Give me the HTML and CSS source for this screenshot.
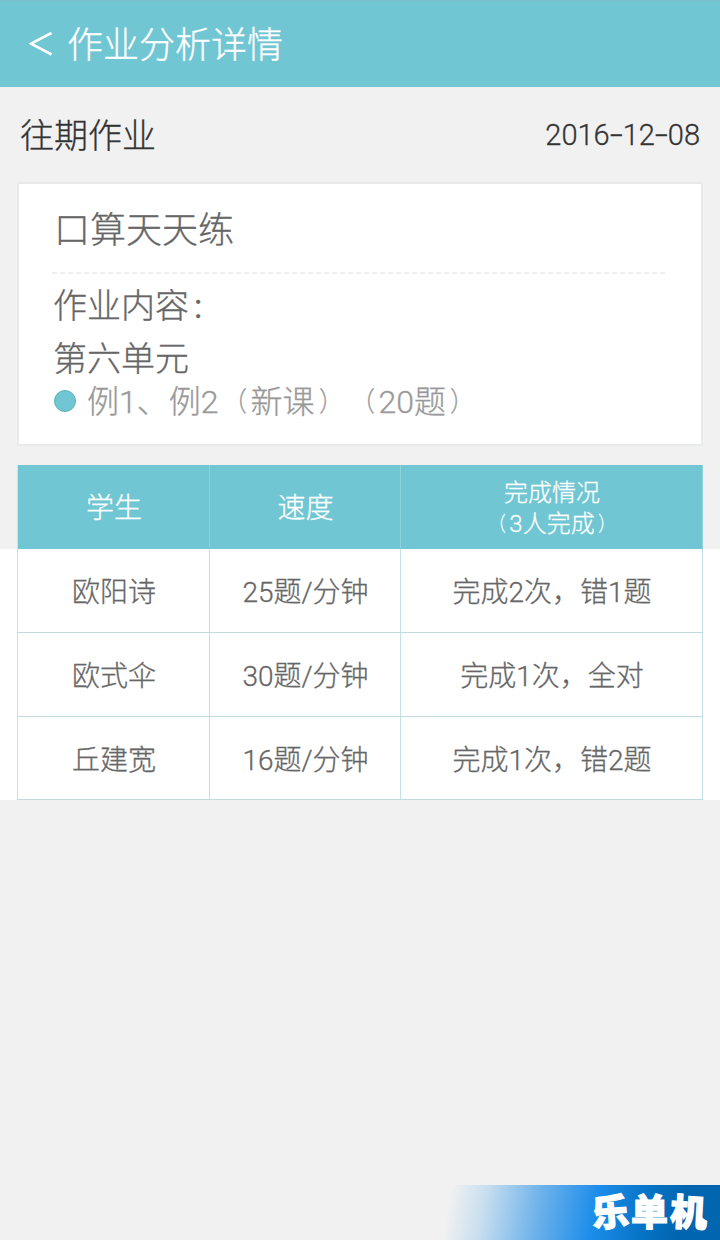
FILE: index.html
```
<!DOCTYPE html>
<html lang="zh-CN">
<head>
<meta charset="utf-8">
<title>作业分析详情</title>
<link rel="stylesheet" href="styles.css">
</head>
<body>
<header class="topbar">
  <svg class="back" width="24" height="26" viewBox="0 0 24 26"><path d="M22.500 2 2 12.700l20.500 10.800" fill="none" stroke="#fff" stroke-width="2.600"/></svg>
  <h1 class="topbar-title">作业分析详情</h1>
</header>
<section class="intro">
  <h2 class="intro-title">往期作业</h2>
  <time class="date">2016<span class="dash">-</span>12<span class="dash">-</span>08</time>
</section>
<section class="card">
  <h3 class="card-title">口算天天练</h3>
  <svg class="divider" width="616" height="2" viewBox="0 0 616 2"><path d="M0 1h616" stroke="#e9e9e9" stroke-width="1.500" stroke-dasharray="5 3"/></svg>
  <p class="label">作业内容<span class="colon">:</span></p>
  <p class="unit">第六单元</p>
  <p class="item"><span class="dot"></span><span>例1、例2<span class="paren">（</span>新课<span class="paren">）</span><span class="paren">（</span>20题<span class="paren">）</span></span></p>
</section>
<div class="results">
  <div class="grid">
    <div class="cell head">学生</div>
    <div class="cell head">速度</div>
    <div class="cell head small"><span>完成情况</span><span><span class="paren">（</span>3人完成<span class="paren">）</span></span></div>
    <div class="cell">欧阳诗</div>
    <div class="cell">25题/分钟</div>
    <div class="cell">完成2次，错1题</div>
    <div class="cell">欧式伞</div>
    <div class="cell">30题/分钟</div>
    <div class="cell">完成1次，全对</div>
    <div class="cell">丘建宽</div>
    <div class="cell">16题/分钟</div>
    <div class="cell">完成1次，错2题</div>
  </div>
</div>
<footer class="brand"><span class="tilt-left">乐</span><span>单</span><span class="tilt-right">机</span></footer>
</body>
</html>
```

FILE: styles.css
```
* { box-sizing: border-box; margin: 0; padding: 0; }
body {
  display: flex;
  flex-direction: column;
  width: 720px;
  height: 1240px;
  overflow: hidden;
  background: #f1f1f1;
  color: #666;
  font-family: Roboto, "Noto Sans CJK SC", sans-serif;
  font-weight: 300;
  text-spacing-trim: space-all;
  -webkit-text-stroke: 0.3px currentColor;
}
h1, h2, h3 { font-weight: 300; }
.topbar {
  display: flex;
  align-items: center;
  gap: 14px;
  height: 87px;
  padding-left: 29px;
  background: #70c6d3;
  border-top: 1px solid #7fbdcc;
  color: #fff;
}
.topbar-title { padding-top: 3px; font-size: 36px; line-height: 52px; }
.intro {
  display: flex;
  justify-content: space-between;
  align-items: center;
  height: 95px;
  padding: 0 20px;
  color: #333;
}
.intro-title { padding-top: 2px; font-size: 34px; line-height: 50px; }
.date { font-size: 29px; }
.dash { display: inline-block; width: 13px; text-align: center; transform: scaleX(1.6); }
.card {
  height: 264px;
  margin: 0 17px;
  padding: 21px 0 0 35px;
  background: #fff;
  border: 2px solid #e9eaea;
}
.card-title { font-size: 36px; line-height: 52px; }
.divider { display: block; margin: 15px 0 6px -2px; }
.label, .unit { margin-left: -1px; font-size: 34px; line-height: 53px; }
.colon { margin-left: 5px; font-weight: 400; }
.item {
  display: flex;
  align-items: center;
  margin-top: -2px;
  font-size: 32px;
  line-height: 32px;
  color: #999;
}
.item > span:last-child { padding-top: 2px; }
.paren { display: inline-block; transform: scale(.75, .85); }
.dot {
  width: 22px;
  height: 22px;
  margin-right: 11px;
  border: 1px solid #58b3b8;
  border-radius: 50%;
  background: #70c6d3;
}
.results {
  margin-top: 19px;
  padding: 0 17px;
  background: linear-gradient(#f1f1f1 84px, #fff 84px);
}
.grid {
  display: grid;
  grid-template-columns: 192px 191px 302px;
  grid-template-rows: 84px 84px 84px 83px;
  border-left: 1px solid #cbe2e5;
}
.cell {
  display: flex;
  flex-direction: column;
  align-items: center;
  justify-content: center;
  padding: 5px 0 0 1px;
  border-right: 1px solid #c4dfe3;
  border-bottom: 1px solid #c1dadd;
  background: #fff;
  font-size: 28px;
  line-height: 40px;
}
.head {
  background: #70c6d3;
  border-color: #8dd2dd;
  border-bottom-color: #70c6d3;
  color: #fff;
}
.small { font-size: 24px; line-height: 31px; }
.brand {
  display: flex;
  justify-content: flex-end;
  align-items: center;
  gap: 2px;
  width: 280px;
  height: 55px;
  margin: auto 0 0 auto;
  padding: 3px 13px 0 0;
  background: linear-gradient(100deg, #f1f1f1 4%, #c9dfef 16%, #6bb1ea 36%, #1c8dea 55%, #0674c6 72%, #0265b0 85%);
  color: #fff;
  font-size: 37px;
  font-weight: 900;
  line-height: 50px;
  -webkit-text-stroke: 1.2px #fff;
}
.tilt-left { transform: rotate(-5deg); }
.tilt-right { transform: rotate(3deg); }
```
